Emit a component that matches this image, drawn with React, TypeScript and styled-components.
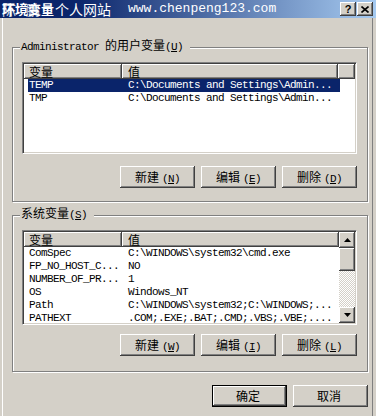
import React from "react";
import styled, { createGlobalStyle } from "styled-components";

const GlobalStyle = createGlobalStyle`
  html, body {
    margin: 0;
    padding: 0;
    background: #d4d0c8;
  }
  body {
    font-family: "Liberation Mono", "Noto Sans CJK SC", monospace;
    font-size: 11px;
    letter-spacing: -0.6px;
    color: #000;
  }
  * { box-sizing: border-box; }
`;

const Window = styled.div`
  width: 376px;
  height: 416px;
  background: #d4d0c8;
  overflow: hidden;
  box-shadow: inset 2px 0 #d4d0c8, inset 3px 0 #ffffff, inset -3px 0 #d4d0c8, inset -4px 0 #808080;
`;

const TitleBar = styled.div`
  height: 18px;
  display: flex;
  align-items: center;
  padding: 0 3px 0 2px;
  background: linear-gradient(90deg, #0a246a 0%, #0a246a 20%, #a6caf0 100%);
  color: #fff;
  letter-spacing: 0;
`;

const TitleMark = styled.span`
  display: grid;
  width: 53px;
  font-family: "Noto Sans CJK SC", sans-serif;
  line-height: 16px;
  & > span {
    grid-area: 1 / 1;
  }
`;

const MarkBack = styled.span`
  font-size: 14px;
  letter-spacing: 10px;
  opacity: 0.85;
`;

const MarkFront = styled.span`
  font-size: 13px;
  font-weight: 700;
`;

const TitleCjk = styled.span`
  font-family: "Noto Sans CJK SC", sans-serif;
  font-size: 14px;
  line-height: 16px;
  width: 73px;
`;

const TitleUrl = styled.span`
  font-family: "Liberation Mono", monospace;
  font-size: 13px;
  line-height: 16px;
  flex: 1;
`;

const TitleButton = styled.button<{ $gap?: number }>`
  width: 16px;
  height: 14px;
  margin-left: ${(p) => p.$gap ?? 0}px;
  padding: 0;
  border: none;
  background: #d4d0c8;
  box-shadow: inset -1px -1px #404040, inset 1px 1px #ffffff, inset -2px -2px #808080;
  display: flex;
  align-items: center;
  justify-content: center;
  font-family: "Liberation Sans", sans-serif;
  font-weight: 700;
  font-size: 11px;
  color: #000;
`;

const Body = styled.div`
  padding: 23px 8px 0 12px;
`;

const GroupBox = styled.fieldset<{ $top: number; $bottom: number }>`
  margin: ${(p) => p.$top}px 0 0 0;
  padding: 9px 10px ${(p) => p.$bottom}px 9px;
  width: 356px;
  min-width: 0;
  border: 1px solid #808080;
  box-shadow: inset 1px 1px #ffffff, 1px 1px #ffffff;
`;

const Legend = styled.legend`
  margin-left: -2px;
  padding: 0 7px 0 1px;
  height: 12px;
  line-height: 12px;
  background: #d4d0c8;
  white-space: nowrap;
  & .cjk {
    font-size: 12px;
    letter-spacing: 0;
  }
`;

const ListView = styled.div<{ $height: number }>`
  width: 335px;
  height: ${(p) => p.$height}px;
  background: #ffffff;
  border: 1px solid;
  border-color: #808080 #ffffff #ffffff #808080;
  box-shadow: inset 1px 1px #404040, inset -1px -1px #d4d0c8;
  padding: 1px;
  display: flex;
  overflow: hidden;
`;

const ListContent = styled.div`
  flex: 1;
  display: flex;
  flex-direction: column;
  overflow: hidden;
`;

const Header = styled.div`
  display: flex;
  height: 15px;
  flex-shrink: 0;
`;

const HeaderCell = styled.div<{ $width?: number }>`
  ${(p) => (p.$width ? `width: ${p.$width}px;` : "flex: 1;")}
  height: 15px;
  padding-left: ${(p) => (p.$width === 98 ? 5 : 6)}px;
  background: #d4d0c8;
  box-shadow: inset -1px -1px #404040, inset 1px 1px #ffffff, inset -2px -2px #808080;
  font-family: "Noto Sans CJK SC", sans-serif;
  font-size: 12px;
  letter-spacing: 0;
  line-height: 15px;
`;

const Row = styled.div<{ $selected?: boolean }>`
  display: flex;
  margin-left: 4px;
  width: 312px;
  height: 13px;
  flex-shrink: 0;
  line-height: 13px;
  white-space: nowrap;
  background: ${(p) => (p.$selected ? "#0a246a" : "transparent")};
  color: ${(p) => (p.$selected ? "#ffffff" : "#000000")};
`;

const NameCell = styled.div`
  width: 94px;
  padding-left: 1px;
  overflow: hidden;
`;

const ValueCell = styled.div`
  width: 218px;
  padding-left: 6px;
  overflow: hidden;
`;

const ScrollBar = styled.div`
  width: 16px;
  display: flex;
  flex-direction: column;
`;

const ScrollButton = styled.div<{ $height: number }>`
  height: ${(p) => p.$height}px;
  flex-shrink: 0;
  background: #d4d0c8;
  box-shadow: inset -1px -1px #404040, inset 1px 1px #ffffff, inset -2px -2px #808080;
  display: flex;
  align-items: center;
  justify-content: center;
`;

const ScrollTrack = styled.div`
  flex: 1;
  background: repeating-conic-gradient(#d4d0c8 0 25%, #ffffff 0 50%) 0 0 / 2px 2px;
`;

const ButtonRow = styled.div<{ $top: number }>`
  display: flex;
  justify-content: flex-end;
  gap: 6px;
  margin-top: ${(p) => p.$top}px;
`;

const Button = styled.button<{ $default?: boolean }>`
  width: 75px;
  height: 22px;
  padding: 0;
  background: #d4d0c8;
  border: ${(p) => (p.$default ? "1px solid #000" : "none")};
  box-shadow: inset -1px -1px #404040, inset 1px 1px #ffffff, inset -2px -2px #808080;
  font-family: "Liberation Mono", "Noto Sans CJK SC", monospace;
  font-size: 11px;
  letter-spacing: -0.6px;
  color: #000;
  & .cjk {
    font-size: 12px;
    letter-spacing: 0;
    margin-right: 3px;
  }
`;

const Arrow = ({ up }: { up?: boolean }) => (
  <svg width="7" height="4" viewBox="0 0 7 4">
    <polygon points={up ? "3.5,0 7,4 0,4" : "0,0 7,0 3.5,4"} fill="#000" />
  </svg>
);

const userVars = [
  { name: "TEMP", value: "C:\\Documents and Settings\\Admin...", selected: true },
  { name: "TMP", value: "C:\\Documents and Settings\\Admin..." },
];

const systemVars = [
  { name: "ComSpec", value: "C:\\WINDOWS\\system32\\cmd.exe" },
  { name: "FP_NO_HOST_C...", value: "NO" },
  { name: "NUMBER_OF_PR...", value: "1" },
  { name: "OS", value: "Windows_NT" },
  { name: "Path", value: "C:\\WINDOWS\\system32;C:\\WINDOWS;..." },
  { name: "PATHEXT", value: ".COM;.EXE;.BAT;.CMD;.VBS;.VBE;...." },
];

function ActionButtons({ top, keys }: { top: number; keys: string[] }) {
  const labels = ["新建", "编辑", "删除"];
  return (
    <ButtonRow $top={top}>
      {labels.map((label, i) => (
        <Button key={label}>
          <span className="cjk">{label}</span>(<u>{keys[i]}</u>)
        </Button>
      ))}
    </ButtonRow>
  );
}

export default function App() {
  return (
    <Window>
      <GlobalStyle />
      <TitleBar>
        <TitleMark>
          <MarkBack>陈鹏</MarkBack>
          <MarkFront>环境变量</MarkFront>
        </TitleMark>
        <TitleCjk>个人网站</TitleCjk>
        <TitleUrl>www.chenpeng123.com</TitleUrl>
        <TitleButton>?</TitleButton>
        <TitleButton $gap={1}>
          <svg width="8" height="7" viewBox="0 0 8 7">
            <path d="M0.5 0.5 L7.5 6.5 M7.5 0.5 L0.5 6.5" stroke="#000" strokeWidth="1.6" />
          </svg>
        </TitleButton>
      </TitleBar>

      <Body>
        <GroupBox $top={0} $bottom={13}>
          <Legend>
            Administrator <span className="cjk">的用户变量</span>(<u>U</u>)
          </Legend>
          <ListView $height={92}>
            <ListContent>
              <Header>
                <HeaderCell $width={98}>变量</HeaderCell>
                <HeaderCell $width={216}>值</HeaderCell>
                <HeaderCell />
              </Header>
              {userVars.map((v) => (
                <Row key={v.name} $selected={v.selected}>
                  <NameCell>{v.name}</NameCell>
                  <ValueCell>{v.value}</ValueCell>
                </Row>
              ))}
            </ListContent>
          </ListView>
          <ActionButtons top={12} keys={["N", "E", "D"]} />
        </GroupBox>

        <GroupBox $top={7} $bottom={15}>
          <Legend>
            <span className="cjk">系统变量</span>(<u>S</u>)
          </Legend>
          <ListView $height={95}>
            <ListContent>
              <Header>
                <HeaderCell $width={98}>变量</HeaderCell>
                <HeaderCell $width={217}>值</HeaderCell>
              </Header>
              {systemVars.map((v) => (
                <Row key={v.name}>
                  <NameCell>{v.name}</NameCell>
                  <ValueCell>{v.value}</ValueCell>
                </Row>
              ))}
            </ListContent>
            <ScrollBar>
              <ScrollButton $height={16}>
                <Arrow up />
              </ScrollButton>
              <ScrollButton $height={23} />
              <ScrollTrack />
              <ScrollButton $height={16}>
                <Arrow />
              </ScrollButton>
            </ScrollBar>
          </ListView>
          <ActionButtons top={9} keys={["W", "I", "L"]} />
        </GroupBox>

        <ButtonRow $top={13}>
          <Button $default>
            <span className="cjk">确定</span>
          </Button>
          <Button>
            <span className="cjk">取消</span>
          </Button>
        </ButtonRow>
      </Body>
    </Window>
  );
}
